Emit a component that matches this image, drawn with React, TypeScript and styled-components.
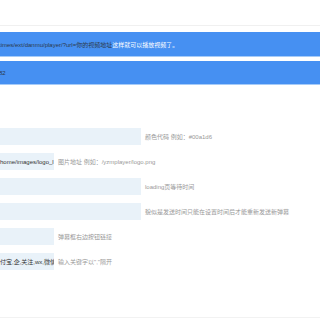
import styled, { createGlobalStyle } from "styled-components";

const GlobalStyle = createGlobalStyle`
  body {
    margin: 0;
    background: #fff;
    font-family: "Liberation Sans", "Noto Sans CJK SC", sans-serif;
  }
`;

interface Field {
  value: string;
  hint: string;
  short?: boolean;
}

const fields: Field[] = [
  { value: "", hint: "颜色代码 例如：#00a1d6" },
  { value: "home/images/logo_l", hint: "图片地址 例如：/yzmplayer/logo.png", short: true },
  { value: "", hint: "loading页等待时间" },
  { value: "", hint: "貌似是发送时间只能在设置时间后才能重新发送新弹幕" },
  { value: "", hint: "弹幕框右边按钮链接", short: true },
  { value: "付宝,企,关注,wx,微信", hint: "输入关键字以\",\"隔开", short: true },
];

function App() {
  return (
    <Page>
      <GlobalStyle />
      <TopBar />
      <Notices>
        <Notice>
          <Dark>times/ext/danmu/player/?url=你的视频地址</Dark>
          <Light>这样就可以播放视频了。</Light>
        </Notice>
        <Notice>
          <Dark>82</Dark>
        </Notice>
      </Notices>
      <Form>
        {fields.map((f, i) => (
          <Row key={i}>
            <Input $short={f.short} readOnly value={f.value} />
            <Hint>{f.hint}</Hint>
          </Row>
        ))}
      </Form>
      <Footer />
    </Page>
  );
}

export default App;

const Page = styled.div`
  width: 320px;
  height: 320px;
  overflow: hidden;
  display: flex;
  flex-direction: column;
`;

const TopBar = styled.div`
  height: 25px;
  border-bottom: 1px solid #f0f0f0;
  flex-shrink: 0;
`;

const Notices = styled.div`
  margin-top: 6px;
  display: flex;
  flex-direction: column;
  gap: 4px;
`;

const Notice = styled.div`
  height: 24px;
  background: #4690f2;
  border-bottom: 1px solid #a6cbf8;
  display: flex;
  align-items: center;
  font-size: 6px;
  white-space: nowrap;
  overflow: hidden;
  box-sizing: border-box;
  &:first-child {
    height: 25px;
  }
`;

const Dark = styled.span`
  color: #2d3a4a;
  margin-left: -1px;
`;

const Light = styled.span`
  color: #fff;
`;

const Form = styled.div`
  margin-top: 43px;
  display: flex;
  flex-direction: column;
  gap: 8px;
`;

const Row = styled.div`
  display: flex;
  align-items: center;
  gap: 4px;
  height: 17px;
`;

const Input = styled.input<{ $short?: boolean }>`
  width: ${(p) => (p.$short ? "54px" : "141px")};
  height: 17px;
  box-sizing: border-box;
  border: 0;
  padding: 0;
  margin: 0;
  background: #e9f2f9;
  color: #333;
  font-family: "Liberation Sans", "Noto Sans CJK SC", sans-serif;
  font-size: 6px;
  outline: none;
  flex-shrink: 0;
`;

const Hint = styled.span`
  color: #999;
  font-size: 6px;
  white-space: nowrap;
`;

const Footer = styled.div`
  margin-top: auto;
  height: 2px;
  border-top: 1px solid #f2f2f2;
`;
